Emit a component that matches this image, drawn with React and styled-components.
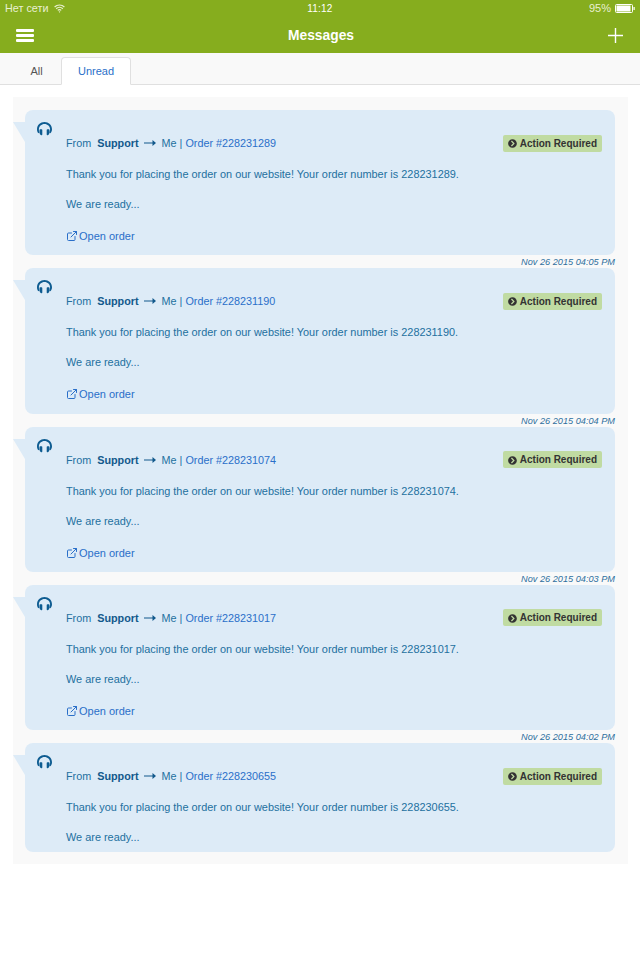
import React from 'react';
import styled, { createGlobalStyle } from 'styled-components';
import { FaChevronCircleRight } from 'react-icons/fa';
import { FiExternalLink } from 'react-icons/fi';

const GlobalStyle = createGlobalStyle`
    html, body {
        margin: 0;
        padding: 0;
        background: #fff;
        font-family: "Liberation Sans", Arial, sans-serif;
    }
`;

const Page = styled.div`
    width: 640px;
    height: 960px;
    overflow: hidden;
    background: #fff;
`;

// top green area
const Header = styled.header`
    height: 53px;
    background: #86ad1e;
    color: #fff;
`;

const StatusBar = styled.div`
    height: 17px;
    padding: 0 5px;
    display: grid;
    grid-template-columns: 1fr auto 1fr;
    align-items: center;
    font-size: 11px;
    line-height: 17px;
`;

const Carrier = styled.div`
    display: flex;
    align-items: center;
    gap: 6px;
    color: #e9f0d2;
    font-size: 10.8px;
`;

const Clock = styled.div`
    font-size: 10px;
    letter-spacing: 0.2px;
`;

const Battery = styled.div`
    display: flex;
    align-items: center;
    justify-content: flex-end;
    gap: 4px;
    color: #e9f0d2;
`;

const NavBar = styled.div`
    height: 36px;
    padding: 0 17px 0 16px;
    display: flex;
    align-items: center;
    justify-content: space-between;
`;

const NavTitle = styled.div`
    font-size: 13.8px;
    font-weight: bold;
`;

const Tabs = styled.nav`
    height: 31px;
    background: #f9f9f9;
    border-bottom: 1px solid #e0e0e0;
    display: flex;
    align-items: flex-end;
    padding-left: 14px;
`;

const Tab = styled.div`
    box-sizing: border-box;
    height: ${p => (p.$active ? '28px' : '27px')};
    width: ${p => (p.$active ? '70px' : '45px')};
    margin-bottom: ${p => (p.$active ? '-1px' : '0')};
    margin-right: 2px;
    display: flex;
    align-items: center;
    justify-content: center;
    font-size: 11px;
    color: ${p => (p.$active ? '#2a6fc9' : '#555')};
    background: ${p => (p.$active ? '#fff' : 'transparent')};
    border: 1px solid ${p => (p.$active ? '#e0e0e0' : 'transparent')};
    border-bottom: 1px solid ${p => (p.$active ? '#fff' : 'transparent')};
    border-radius: 4px 4px 0 0;
`;

// messages panel
const Panel = styled.main`
    margin: 12px 12px 0 13px;
    padding: 13px 13px 12px 12px;
    background: #f9f9f9;
`;

const Message = styled.article`
    position: relative;
    box-sizing: border-box;
    height: ${p => (p.$short ? '109px' : '145.33px')};
    padding: 12px 13px 0 41px;
    background: #ddebf7;
    border-radius: 8px;
    color: #23709f;
    font-size: 10.92px;
    line-height: 14px;

    &::before {
        content: '';
        position: absolute;
        left: -12px;
        top: 12px;
        border-top: 0 solid transparent;
        border-right: 12px solid #ddebf7;
        border-bottom: 20px solid transparent;
    }
`;

const Avatar = styled.div`
    position: absolute;
    left: 12px;
    top: 12px;
    width: 15px;
    height: 14px;
`;

const TopRow = styled.div`
    height: 18px;
    margin-top: 12px;
    display: flex;
    align-items: center;
    justify-content: space-between;
`;

const Route = styled.div`
    display: flex;
    align-items: center;
    font-size: 10.8px;
    white-space: pre;
`;

const Sender = styled.b`
    margin: 0 5px 0 6px;
    color: #12598c;
`;

const Recipient = styled.span`
    margin-left: 6px;
`;

const OrderLink = styled.span`
    color: #2a6fc9;
`;

const Badge = styled.div`
    box-sizing: border-box;
    height: 17px;
    padding: 1px 5px 0 5px;
    display: flex;
    align-items: center;
    gap: 3px;
    background: #c0dba2;
    border-radius: 2px;
    color: #333;
    font-size: 10px;
    font-weight: bold;
`;

const Line = styled.p`
    margin: ${p => p.$gap}px 0 0;
`;

const OpenOrder = styled.div`
    margin-top: 18px;
    display: flex;
    align-items: center;
    gap: 1px;
    font-size: 11px;
    color: #2a6fc9;
`;

const Time = styled.div`
    height: 13px;
    text-align: right;
    font-size: 9.2px;
    font-style: italic;
    line-height: 14px;
    color: #2e6f9e;
`;

function MessageCard({ order, time, last }) {
    return (
        <>
            <Message $short={last}>
                <Avatar>
                    <svg width="15" height="14" viewBox="0 0 15 14" fill="#0e5c91">
                        <path d="M7.5 0C3.4 0 0 3.1 0 7.2c0 1.6.5 3 1.3 4.1l1.2-.9A5.4 5.4 0 0 1 1.9 7.2C1.9 4.2 4.4 1.9 7.5 1.9s5.6 2.3 5.6 5.3c0 1.2-.3 2.3-.9 3.2l1.2.9c.9-1.1 1.6-2.5 1.6-4.1C15 3.1 11.6 0 7.5 0z" />
                        <path d="M3.4 7.2h1.2c.4 0 .7.3.7.7v4.6c0 .4-.3.7-.7.7h-.4c-1-.4-1.7-1.5-1.7-3V8.4c0-.7.3-1.2.9-1.2zM10.4 7.2h1.2c.6 0 .9.5.9 1.2v1.8c0 1.5-.7 2.6-1.7 3h-.4c-.4 0-.7-.3-.7-.7V7.9c0-.4.3-.7.7-.7z" />
                    </svg>
                </Avatar>
                <TopRow>
                    <Route>
                        From
                        <Sender>Support</Sender>
                        <svg width="12" height="8" viewBox="0 0 12 8">
                            <path d="M0 3.4h8.5V1L12 4 8.5 7V4.6H0z" fill="#12598c" />
                        </svg>
                        <Recipient>Me | </Recipient>
                        <OrderLink>Order #{order}</OrderLink>
                    </Route>
                    <Badge><FaChevronCircleRight size={9} />Action Required</Badge>
                </TopRow>
                <Line $gap={15}>Thank you for placing the order on our website! Your order number is {order}.</Line>
                <Line $gap={16}>We are ready...</Line>
                {!last && <OpenOrder><FiExternalLink size={12} strokeWidth={2} />Open order</OpenOrder>}
            </Message>
            {!last && <Time>{time}</Time>}
        </>
    );
}

function App() {
    const messages = [
        { order: '228231289', time: 'Nov 26 2015 04:05 PM' },
        { order: '228231190', time: 'Nov 26 2015 04:04 PM' },
        { order: '228231074', time: 'Nov 26 2015 04:03 PM' },
        { order: '228231017', time: 'Nov 26 2015 04:02 PM' },
        { order: '228230655', last: true }
    ];
    return (
        <Page>
            <GlobalStyle />
            <Header>
                <StatusBar>
                    <Carrier>
                        Нет сети
                        <svg width="11" height="9" viewBox="0 0 11 9" fill="none" stroke="#e9f0d2" strokeWidth="1.2">
                            <path d="M.6 3a7 7 0 0 1 9.8 0M2.2 4.8a4.7 4.7 0 0 1 6.6 0M3.8 6.4a2.4 2.4 0 0 1 3.4 0" />
                            <path d="M5.5 8.8 4.6 7.8a1.3 1.3 0 0 1 1.8 0z" fill="#e9f0d2" stroke="none" />
                        </svg>
                    </Carrier>
                    <Clock>11:12</Clock>
                    <Battery>
                        95%
                        <svg width="20" height="9" viewBox="0 0 20 9">
                            <rect x=".5" y=".5" width="17" height="8" rx="1" fill="none" stroke="#fff" />
                            <rect x="1.5" y="1.5" width="14" height="6" fill="#fff" />
                            <rect x="18.5" y="3" width="1.2" height="3" fill="#fff" />
                        </svg>
                    </Battery>
                </StatusBar>
                <NavBar>
                    <svg width="18" height="13" viewBox="0 0 18 13" fill="#fff">
                        <rect y="0" width="18" height="3" rx="1" />
                        <rect y="5" width="18" height="3" rx="1" />
                        <rect y="10" width="18" height="3" rx="1" />
                    </svg>
                    <NavTitle>Messages</NavTitle>
                    <svg width="15" height="15" viewBox="0 0 15 15" stroke="#fff" strokeWidth="1.4">
                        <path d="M7.5 0v15M0 7.5h15" />
                    </svg>
                </NavBar>
            </Header>
            <Tabs>
                <Tab>All</Tab>
                <Tab $active>Unread</Tab>
            </Tabs>
            <Panel>
                {messages.map(m => (
                    <MessageCard key={m.order} {...m} />
                ))}
            </Panel>
        </Page>
    );
}

export default App;
